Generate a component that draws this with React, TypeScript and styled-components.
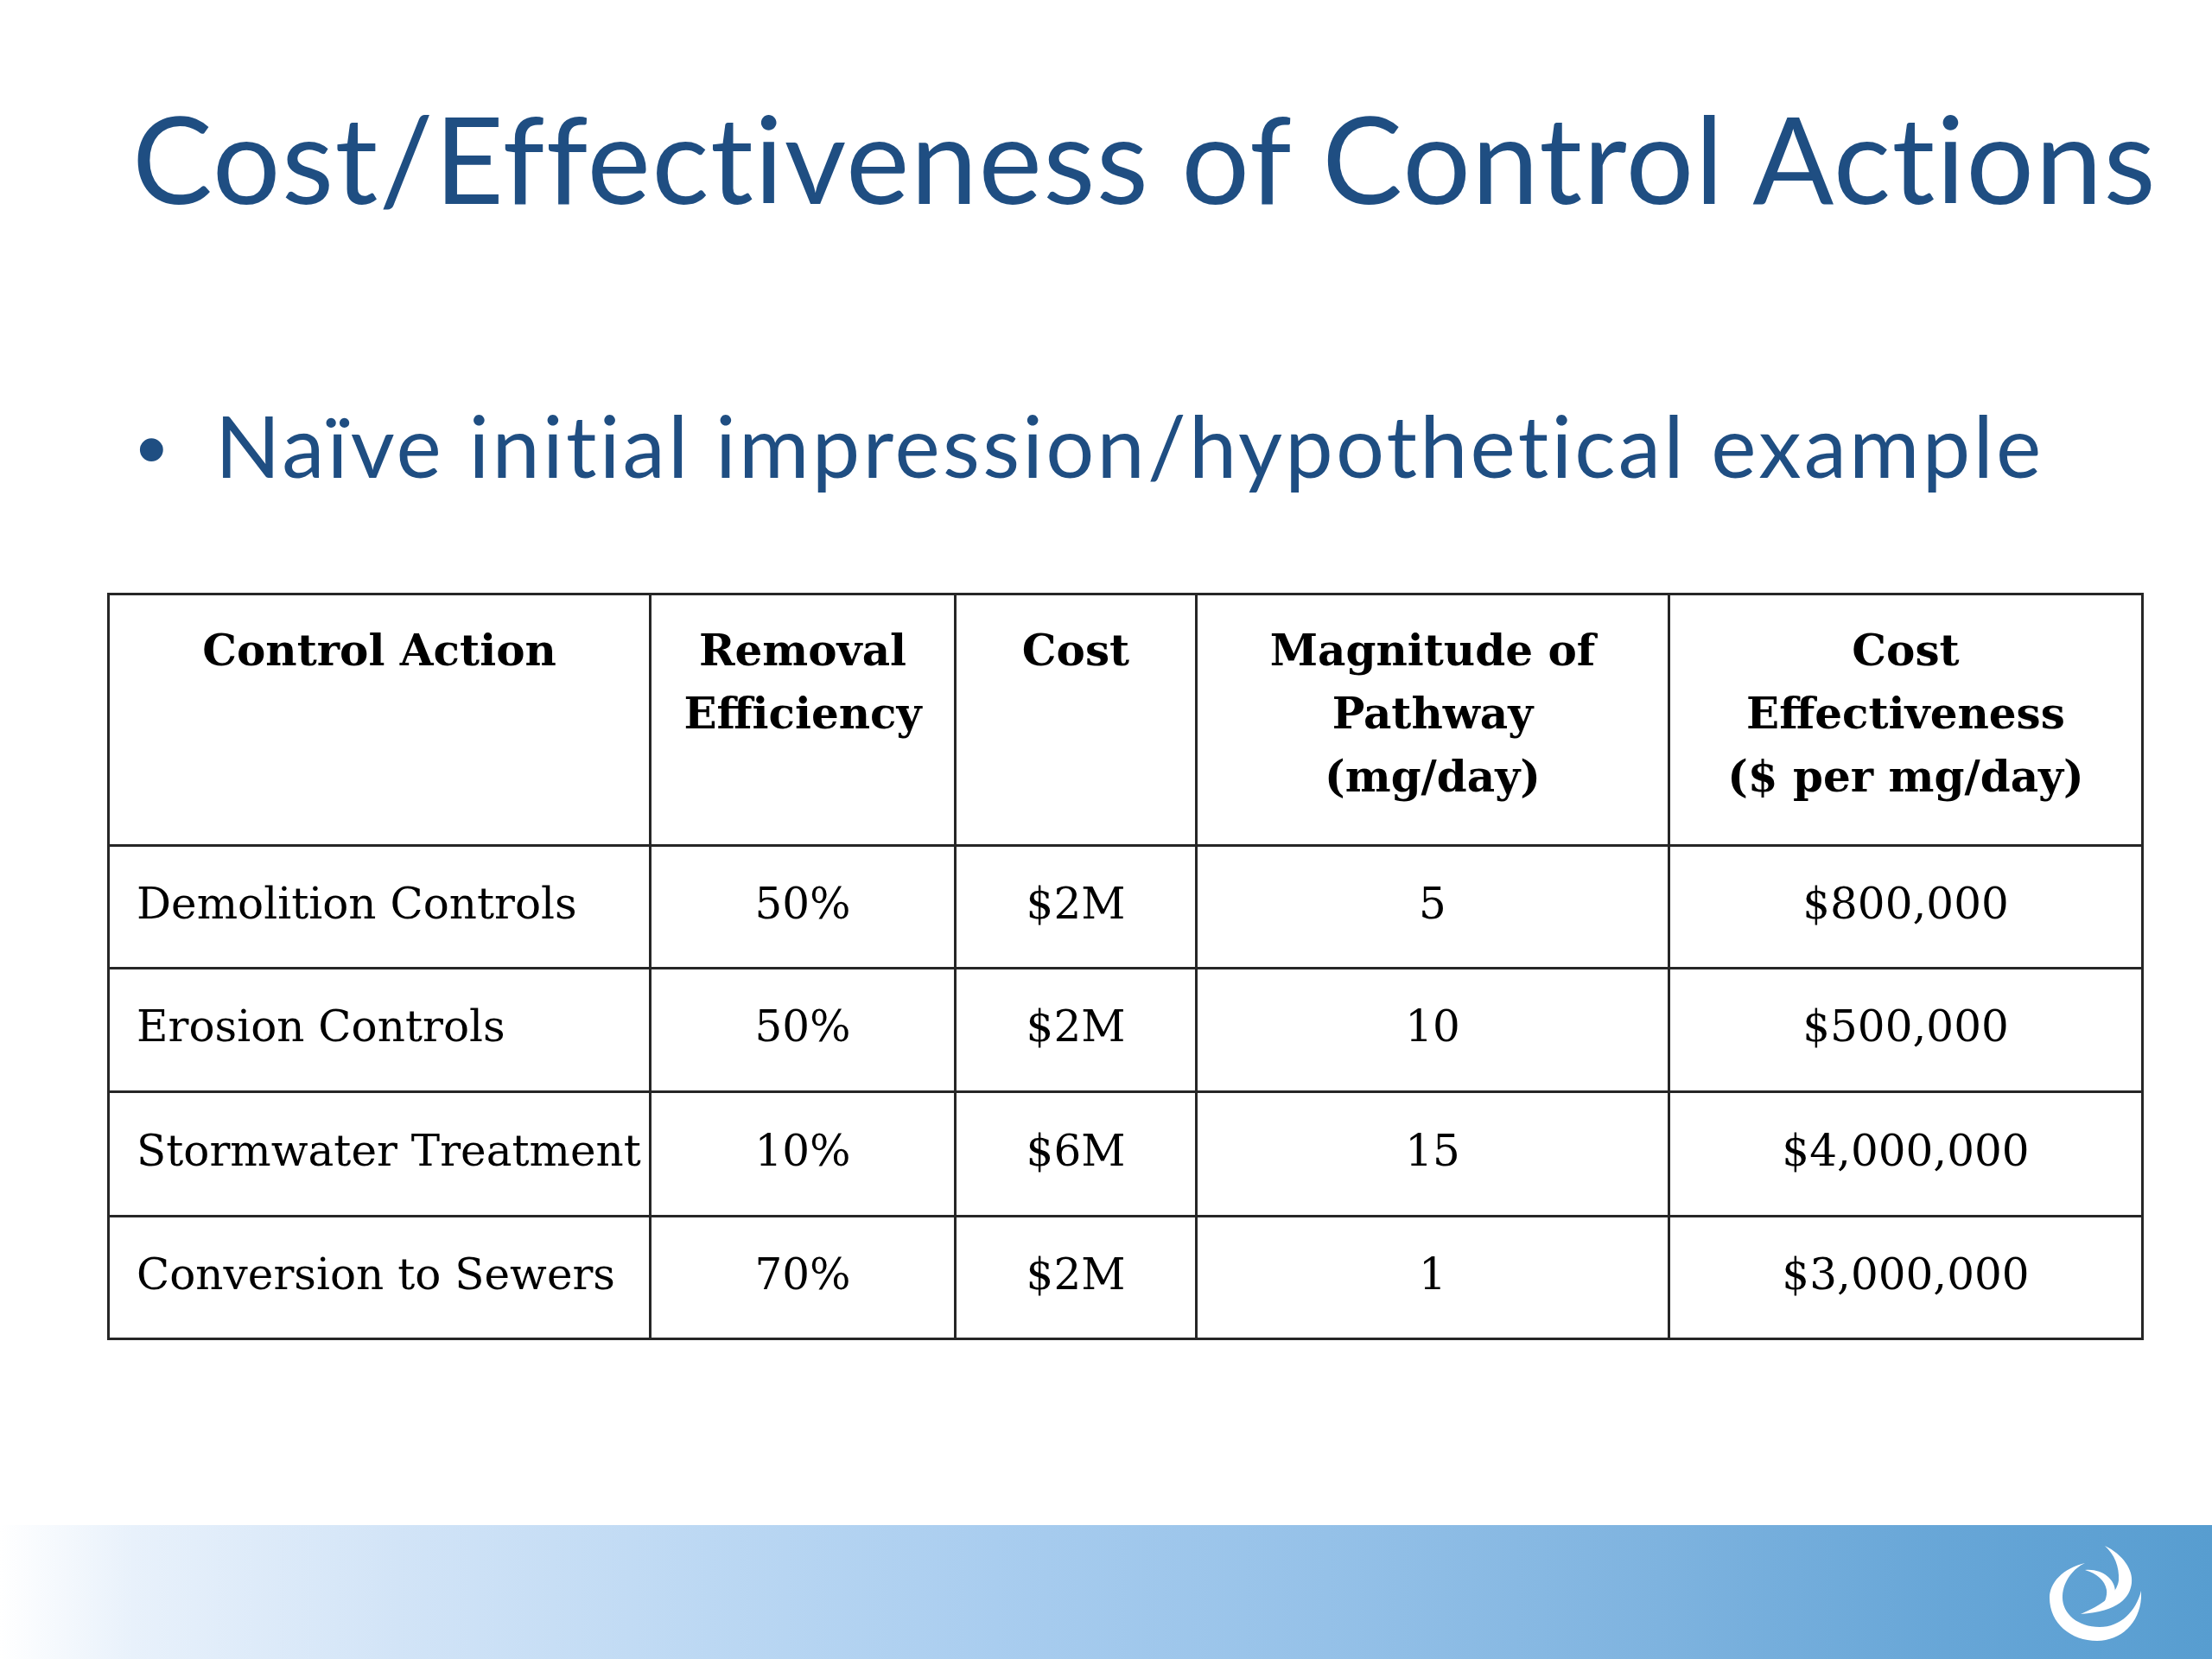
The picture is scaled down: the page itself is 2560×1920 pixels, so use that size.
import React from 'react';
import styled, { createGlobalStyle } from 'styled-components';

const GlobalStyle = createGlobalStyle`
    html, body {
        margin: 0;
        padding: 0;
        background: #ffffff;
    }
`;

const Slide = styled.div`
    width: 2560px;
    height: 1920px;
    display: flex;
    flex-direction: column;
    background: #ffffff;
    overflow: hidden;
`;

const Title = styled.h1`
    margin: 100px 0 0 0;
    padding-left: 153px;
    font-family: Lato, "Open Sans", sans-serif;
    font-weight: 400;
    font-size: 139px;
    line-height: 166px;
    letter-spacing: 1.35px;
    font-variant-ligatures: none;
    color: #1f4e82;
    white-space: nowrap;
`;

const BulletRow = styled.div`
    margin-top: 190px;
    padding-left: 158px;
    display: flex;
    align-items: baseline;
    font-family: Lato, "Open Sans", sans-serif;
    font-size: 99px;
    line-height: 118px;
    color: #1f4e82;
    white-space: nowrap;
`;

const Dot = styled.span`
    width: 91px;
    flex-shrink: 0;
    font-family: "Liberation Sans", Arial, sans-serif;
`;

const BulletText = styled.span`
    letter-spacing: 3.2px;
    font-variant-ligatures: none;
`;

const Table = styled.table`
    margin: 108px 0 0 124px;
    width: 2354px;
    table-layout: fixed;
    border-collapse: collapse;
    font-family: "DejaVu Serif", Georgia, serif;
    font-size: 50px;
    color: #000000;
`;

const Row = styled.tr<{ $h: number }>`
    height: ${(p) => p.$h}px;
`;

const HeadCell = styled.th`
    border: 3px solid #262626;
    padding: 27px 8px 0 8px;
    vertical-align: top;
    text-align: center;
    font-weight: 700;
    line-height: 73px;
`;

const Cell = styled.td<{ $left?: boolean }>`
    border: 3px solid #262626;
    padding: ${(p) => (p.$left ? '0 0 8px 31px' : '0 0 8px 0')};
    vertical-align: middle;
    text-align: ${(p) => (p.$left ? 'left' : 'center')};
    font-weight: 400;
    line-height: 60px;
    white-space: nowrap;
`;

const Band = styled.div`
    margin-top: auto;
    height: 155px;
    display: flex;
    align-items: center;
    justify-content: flex-end;
    padding-right: 82px;
    background: linear-gradient(
        to right,
        #ffffff 0%,
        #e8f1fb 6%,
        #d2e4f7 18%,
        #bcd8f3 32%,
        #a9cdef 45%,
        #95c1e8 60%,
        #7eb3df 75%,
        #67a6d7 88%,
        #579dd0 100%
    );
`;

const widths = [627, 353, 279, 547, 548];

const rows = [
    { action: 'Demolition Controls', eff: '50%', cost: '$2M', mag: '5', ce: '$800,000', h: 142 },
    { action: 'Erosion Controls', eff: '50%', cost: '$2M', mag: '10', ce: '$500,000', h: 143 },
    { action: 'Stormwater Treatment', eff: '10%', cost: '$6M', mag: '15', ce: '$4,000,000', h: 144 },
    { action: 'Conversion to Sewers', eff: '70%', cost: '$2M', mag: '1', ce: '$3,000,000', h: 142 },
];

function Logo() {
    return (
        <svg width="106" height="112" viewBox="0 0 106 112" fill="#ffffff">
            {/* outer ring */}
            <path d="M41,22 C15,28 0,45 0,62 C0,92 25,112 55,112 C85,112 108,88 106,54 C100,78 82,96 58,96 C32,96 14,80 15,60 C16,42 28,28 41,22 Z" />
            {/* upper right swoosh */}
            <path d="M64,2 C85,12 97,30 95,45 C93,62 80,78 36,81 C60,71 78,58 80,42 C81,26 75,12 64,2 Z" />
            {/* inner swoosh */}
            <path d="M41,30 C60,28 76,40 76,55 C76,64 70,72 58,76 C64,68 67,60 66,53 C64,42 55,34 41,30 Z" />
        </svg>
    );
}

export default function App() {
    return (
        <Slide>
            <GlobalStyle />
            <Title>Cost/Effectiveness of Control Actions</Title>
            <BulletRow>
                <Dot>•</Dot>
                <BulletText>Naïve initial impression/hypothetical example</BulletText>
            </BulletRow>
            <Table>
                <colgroup>
                    {widths.map((w, i) => (
                        <col key={i} style={{ width: w }} />
                    ))}
                </colgroup>
                <thead>
                    <Row $h={291}>
                        <HeadCell>Control Action</HeadCell>
                        <HeadCell>Removal<br />Efficiency</HeadCell>
                        <HeadCell>Cost</HeadCell>
                        <HeadCell>Magnitude of<br />Pathway<br />(mg/day)</HeadCell>
                        <HeadCell>Cost<br />Effectiveness<br />($ per mg/day)</HeadCell>
                    </Row>
                </thead>
                <tbody>
                    {rows.map((r) => (
                        <Row key={r.action} $h={r.h}>
                            <Cell $left>{r.action}</Cell>
                            <Cell>{r.eff}</Cell>
                            <Cell>{r.cost}</Cell>
                            <Cell>{r.mag}</Cell>
                            <Cell>{r.ce}</Cell>
                        </Row>
                    ))}
                </tbody>
            </Table>
            <Band>
                <Logo />
            </Band>
        </Slide>
    );
}
